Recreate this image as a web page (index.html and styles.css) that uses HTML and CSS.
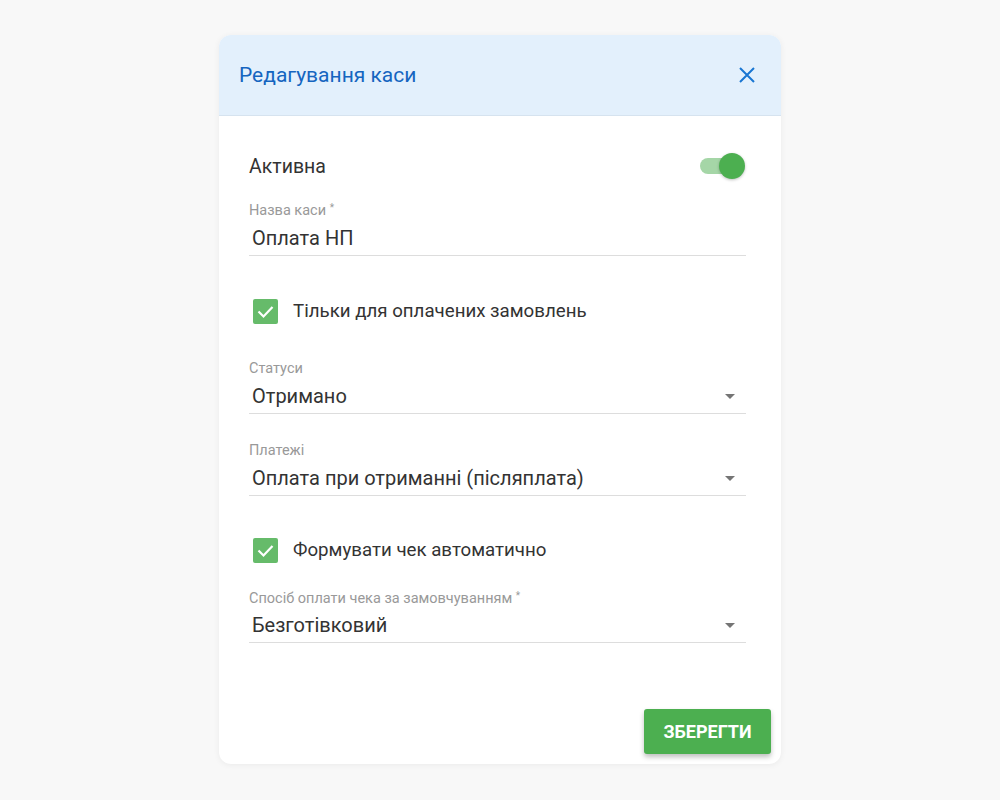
FILE: index.html
```html
<!DOCTYPE html>
<html lang="uk">
<head>
  <meta charset="UTF-8">
  <meta name="viewport" content="width=device-width, initial-scale=1.0">
  <title>Редагування каси</title>
  <link rel="stylesheet" href="styles.css">
</head>
<body>
  <div class="dialog">
    <!-- Header -->
    <div class="dialog-header">
      <h1>Редагування каси</h1>
      <button class="close-btn" type="button" aria-label="Закрити">
        <svg width="18" height="18" viewBox="0 0 18 18"><path d="M2 2 L16 16 M16 2 L2 16" stroke="#1976d2" stroke-width="2" fill="none"/></svg>
      </button>
    </div>

    <!-- Body -->
    <div class="dialog-body">
      <div class="switch-row">
        <span>Активна</span>
        <span class="switch"><span class="switch-thumb"></span></span>
      </div>

      <div class="field field-first">
        <label>Назва каси <sup>*</sup></label>
        <div class="field-value">Оплата НП</div>
      </div>

      <div class="check-row check-first">
        <span class="checkbox">
          <svg width="25" height="25" viewBox="0 0 25 25"><path d="M5.5 12.5 L10.5 17.5 L19.5 8" stroke="#fff" stroke-width="2.2" fill="none"/></svg>
        </span>
        <span>Тільки для оплачених замовлень</span>
      </div>

      <div class="field field-select field-status">
        <label>Статуси</label>
        <div class="field-value">Отримано</div>
        <span class="arrow"></span>
      </div>

      <div class="field field-select field-pay">
        <label>Платежі</label>
        <div class="field-value">Оплата при отриманні (післяплата)</div>
        <span class="arrow"></span>
      </div>

      <div class="check-row check-second">
        <span class="checkbox">
          <svg width="25" height="25" viewBox="0 0 25 25"><path d="M5.5 12.5 L10.5 17.5 L19.5 8" stroke="#fff" stroke-width="2.2" fill="none"/></svg>
        </span>
        <span>Формувати чек автоматично</span>
      </div>

      <div class="field field-select field-method">
        <label>Спосіб оплати чека за замовчуванням <sup>*</sup></label>
        <div class="field-value">Безготівковий</div>
        <span class="arrow"></span>
      </div>
    </div>

    <!-- Footer -->
    <div class="dialog-footer">
      <button class="save-btn" type="button">Зберегти</button>
    </div>
  </div>
</body>
</html>
```

FILE: styles.css
```css
/* Basic Reset */
* {
  margin: 0;
  padding: 0;
  box-sizing: border-box;
  font-family: Roboto, "Liberation Sans", sans-serif;
}

body {
  background-color: #f8f8f8;
  display: flex;
  justify-content: center;
  padding-top: 35px;
  height: 100vh;
}

.dialog {
  width: 562px;
  height: 729px;
  background-color: #fff;
  border-radius: 12px;
  box-shadow: 0 1px 6px rgba(0, 0, 0, 0.06);
  overflow: hidden;
  display: flex;
  flex-direction: column;
}

.dialog-header {
  height: 81px;
  background-color: #e3f0fc;
  border-bottom: 1px solid #d6e3ef;
  display: flex;
  align-items: center;
  justify-content: space-between;
  padding: 0 25px 0 20px;
}

.dialog-header h1 {
  font-size: 21px;
  font-weight: 400;
  color: #1565c0;
}

.close-btn {
  background: none;
  border: none;
  width: 18px;
  height: 18px;
  cursor: pointer;
}

.close-btn svg {
  display: block;
}

.dialog-body {
  padding: 30px 35px 0 30px;
  flex: 1;
}

.switch-row {
  height: 40px;
  display: flex;
  align-items: center;
  justify-content: space-between;
  font-size: 19.5px;
  color: #333;
}

.switch {
  position: relative;
  width: 42px;
  height: 16px;
  margin-right: 4px;
  border-radius: 8px;
  background-color: #a5d6a7;
}

.switch-thumb {
  position: absolute;
  right: -3px;
  top: -5px;
  width: 26px;
  height: 26px;
  border-radius: 50%;
  background-color: #4caf50;
  box-shadow: 0 1px 3px rgba(0, 0, 0, 0.25);
}

.field {
  position: relative;
  border-bottom: 1px solid #ddd;
  padding-bottom: 4px;
}

.field label {
  display: block;
  font-size: 14.5px;
  line-height: 16px;
  color: #999;
}

.field label sup {
  font-size: 10px;
  vertical-align: 4px;
  line-height: 0;
}

.field-value {
  margin-top: 7px;
  padding-left: 3px;
  font-size: 20px;
  line-height: 25px;
  color: #333;
}

.field-method .field-value {
  margin-top: 6px;
}

.arrow {
  position: absolute;
  right: 11px;
  bottom: 14px;
  width: 0;
  height: 0;
  border-left: 5px solid transparent;
  border-right: 5px solid transparent;
  border-top: 5px solid #757575;
}

.field-first {
  margin-top: 17px;
}

.check-row {
  height: 40px;
  display: flex;
  align-items: center;
  gap: 15px;
  font-size: 18.7px;
  color: #333;
  padding-left: 4px;
}

.checkbox {
  width: 25px;
  height: 25px;
  border-radius: 2px;
  background-color: #66bb6a;
}

.checkbox svg {
  display: block;
}

.check-first {
  margin-top: 35px;
}

.field-status {
  margin-top: 30px;
}

.field-pay {
  margin-top: 29px;
}

.check-second {
  margin-top: 34px;
}

.field-method {
  margin-top: 21px;
}

.dialog-footer {
  display: flex;
  justify-content: flex-end;
  padding: 0 10px 10px 0;
}

.save-btn {
  width: 127px;
  height: 45px;
  background-color: #4caf50;
  border: none;
  border-radius: 3px;
  color: #fff;
  font-size: 18px;
  font-weight: 700;
  text-transform: uppercase;
  box-shadow: 0 3px 5px rgba(0, 0, 0, 0.25);
  cursor: pointer;
}

.save-btn:hover {
  background-color: #43a047;
}
```
